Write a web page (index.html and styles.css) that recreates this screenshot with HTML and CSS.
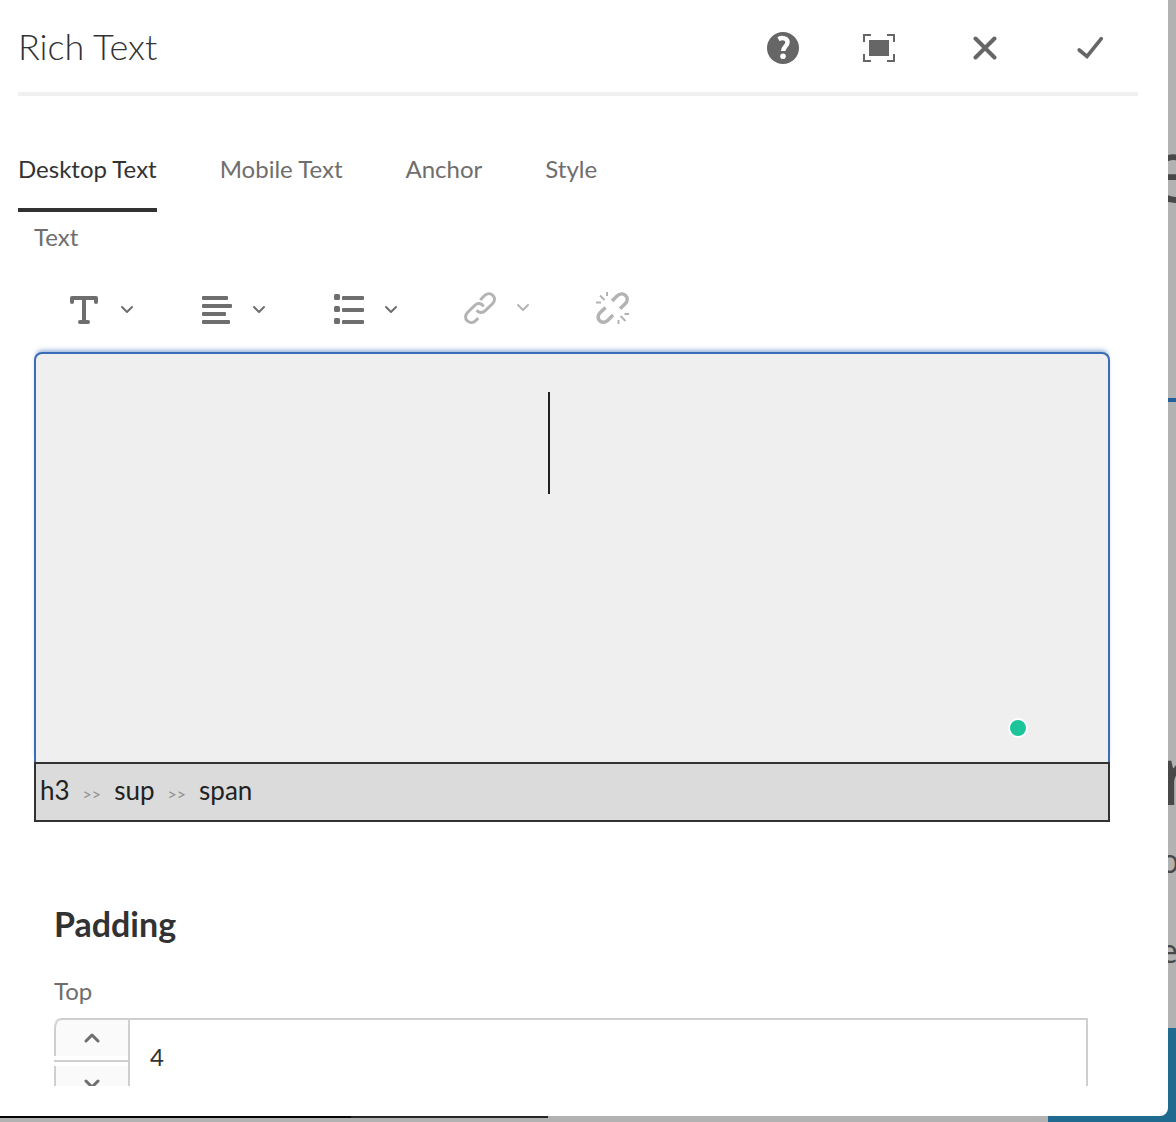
FILE: index.html
```html
<!DOCTYPE html>
<html lang="en">
<head>
  <meta charset="UTF-8">
  <meta name="viewport" content="width=device-width, initial-scale=1.0">
  <title>Rich Text</title>
  <link rel="stylesheet" href="styles.css">
</head>
<body>
  <!-- dimmed page under the dialog -->
  <div class="backdrop" aria-hidden="true">
    <div class="page-photo"></div>
    <div class="page-column">
      <div class="page-title">e</div>
      <div class="page-rule"></div>
      <div class="page-heading">r</div>
      <div class="page-line">o</div>
      <div class="page-line">e</div>
    </div>
    <div class="page-footer"></div>
  </div>

  <main class="dialog" role="dialog" aria-labelledby="dialog-title">
    <header class="dialog-header">
      <h1 id="dialog-title">Rich Text</h1>
      <div class="header-tools">
        <button type="button" aria-label="Help">
          <svg width="32" height="32" viewBox="0 0 32 32">
            <circle cx="16" cy="16" r="16" fill="currentColor"/>
            <path d="M11.500 7.200C15 5.200 20.500 6 20.500 10.200C20.500 14.200 16.300 14.300 16.300 19" fill="none" stroke="#fff" stroke-width="4.500"/>
            <circle cx="16" cy="24.300" r="2.800" fill="#fff"/>
          </svg>
        </button>
        <button type="button" aria-label="Toggle fullscreen">
          <svg width="32" height="28" viewBox="0 0 32 28" fill="none" stroke="currentColor" stroke-width="2">
            <path d="M1 8V1H8M24 1H31V8M31 20V27H24M8 27H1V20"/>
            <path d="M6 6H26V22H6Z" fill="currentColor" stroke="none"/>
          </svg>
        </button>
      </div>
      <div class="header-actions">
        <button type="button" aria-label="Cancel">
          <svg width="24" height="24" viewBox="0 0 24 24" fill="none" stroke="currentColor" stroke-width="4" stroke-linecap="round">
            <path d="M2.500 2.500L21.500 21.500M21.500 2.500L2.500 21.500"/>
          </svg>
        </button>
        <button type="button" aria-label="Done">
          <svg width="28" height="24" viewBox="0 0 28 24" fill="none" stroke="currentColor" stroke-width="3.600" stroke-linecap="round" stroke-linejoin="miter">
            <path d="M3.200 14L11 20.500L25.300 2.700"/>
          </svg>
        </button>
      </div>
    </header>

    <nav class="tabs" role="tablist">
      <button type="button" role="tab" class="tab active" aria-selected="true">Desktop Text</button>
      <button type="button" role="tab" class="tab">Mobile Text</button>
      <button type="button" role="tab" class="tab">Anchor</button>
      <button type="button" role="tab" class="tab">Style</button>
    </nav>

    <section class="panel">
      <div class="field-label" id="text-label">Text</div>

      <div class="toolbar" role="toolbar">
        <button type="button" class="tool" aria-label="Text format">
          <svg width="32" height="32" viewBox="0 0 32 32" fill="none" stroke="currentColor" stroke-width="4" stroke-linecap="round" stroke-linejoin="round">
            <path d="M4 8V4H28V8M12 28H20"/>
            <path d="M16 4V28"/>
          </svg>
          <svg class="chevron" width="14" height="10" viewBox="0 0 14 10"><path d="M2 2L7 7L12 2"/></svg>
        </button>
        <button type="button" class="tool" aria-label="Justify">
          <svg width="32" height="32" viewBox="0 0 32 32" fill="currentColor">
            <rect x="2" y="2" width="26" height="4" rx="1"/>
            <rect x="2" y="10" width="30" height="4" rx="1"/>
            <rect x="2" y="18" width="24" height="4" rx="1"/>
            <rect x="2" y="26" width="28" height="4" rx="1"/>
          </svg>
          <svg class="chevron" width="14" height="10" viewBox="0 0 14 10"><path d="M2 2L7 7L12 2"/></svg>
        </button>
        <button type="button" class="tool" aria-label="Lists">
          <svg width="32" height="32" viewBox="0 0 32 32" fill="currentColor">
            <rect x="2" y="0" width="6" height="6" rx="1.500"/>
            <rect x="2" y="12" width="6" height="6" rx="1.500"/>
            <rect x="2" y="24" width="6" height="6" rx="1.500"/>
            <rect x="10" y="2" width="22" height="4" rx="1"/>
            <rect x="10" y="14" width="22" height="4" rx="1"/>
            <rect x="10" y="26" width="22" height="4" rx="1"/>
          </svg>
          <svg class="chevron" width="14" height="10" viewBox="0 0 14 10"><path d="M2 2L7 7L12 2"/></svg>
        </button>
        <button type="button" class="tool" aria-label="Hyperlink" disabled>
          <svg width="32" height="32" viewBox="0 0 32 32" fill="none" stroke="currentColor" stroke-width="3">
            <path d="M16.200 8L20.300 3.700C22.800 1.200 26.400 0.900 28.700 3.200C31.200 5.700 31 9.200 28.500 11.700L21.300 18.700C18.600 21.300 14.800 20.900 12.600 18.300"/>
            <path d="M19.500 14.500C17.800 11 13.800 10.600 11.200 13L3.700 20.300C1 23 0.900 26.500 3.200 28.800C5.700 31.200 9.200 31 11.700 28.600L14.200 26.200"/>
          </svg>
          <svg class="chevron" width="14" height="10" viewBox="0 0 14 10"><path d="M2 2L7 7L12 2"/></svg>
        </button>
        <button type="button" class="tool" aria-label="Unlink" disabled>
          <svg width="34" height="32" viewBox="0 0 34 32" fill="none" stroke="currentColor" stroke-width="3.500">
            <path d="M16 9L21 4C23.700 1.400 27.300 1.300 29.600 3.600C31.900 5.900 31.700 9.200 29.200 11.700L24 16.700"/>
            <path d="M9.500 15.500L4.300 20.500C1.500 23.200 1.400 26.500 3.700 28.700C6 31 9.300 30.700 11.900 28.200L17 23.100"/>
            <path d="M11 0V4M0 10.500H5M4 3.500L8.500 8M22.500 28V32M28.500 22H33M24.500 24L29.500 29" stroke-width="2"/>
          </svg>
        </button>
      </div>

      <div class="editor">
        <div class="editable" contenteditable="true" role="textbox" aria-multiline="true" aria-labelledby="text-label"><span class="caret"></span></div>
        <span class="status-dot"></span>
      </div>
      <div class="element-path">
        <a href="#">h3</a><span class="separator">&gt;&gt;</span><a href="#">sup</a><span class="separator">&gt;&gt;</span><a href="#">span</a>
      </div>

      <div class="padding-group">
        <h2>Padding</h2>
        <label class="field-label" for="padding-top">Top</label>
        <div class="number-field">
          <div class="steppers">
            <button type="button" aria-label="Increment">
              <svg width="18" height="12" viewBox="0 0 18 12"><path d="M3 9L9 3L15 9"/></svg>
            </button>
            <div class="divider"></div>
            <button type="button" aria-label="Decrement">
              <svg width="18" height="12" viewBox="0 0 18 12"><path d="M3 3L9 9L15 3"/></svg>
            </button>
          </div>
          <input type="number" id="padding-top" value="4">
        </div>
      </div>
    </section>
  </main>
</body>
</html>
```
FILE: styles.css
```css
* {
  box-sizing: border-box;
}

body {
  margin: 0;
  height: 100vh;
  padding: 0 8px 6px 0;
  overflow: hidden;
  background: #b2b2b2;
  color: #323232;
  font-family: Lato, "Open Sans", sans-serif;
  font-size: 24px;
  line-height: 32px;
}

button, input {
  margin: 0;
  padding: 0;
  border: 0;
  background: none;
  color: inherit;
  font: inherit;
}

svg {
  display: block;
  flex: none;
}

/* page behind */
.backdrop {
  position: absolute;
  inset: 0;
  overflow: hidden;
  color: #484848;
  font-family: "Open Sans", sans-serif;
}

.page-column {
  width: 28px;
  margin-left: auto;
  padding-top: 118px;
}

.page-title {
  font-size: 88px;
  line-height: 100px;
}

.page-rule {
  height: 4px;
  margin: 180px 0 336px;
  background: #23609c;
}

.page-heading {
  padding-left: 8px;
  font-size: 80px;
  font-weight: bold;
  line-height: 72px;
}

.page-line {
  padding-left: 12px;
  font-size: 32px;
  line-height: 90px;
}

.page-heading + .page-line {
  padding-top: 6px;
}

.page-photo {
  position: absolute;
  bottom: 4px;
  left: 0;
  width: 548px;
  height: 40px;
  background: linear-gradient(to right, #050608 64%, #262626 64%);
}

.page-footer {
  position: absolute;
  right: 0;
  bottom: 0;
  width: 128px;
  height: 94px;
  background: #20698f;
}

/* dialog */
.dialog {
  position: relative;
  display: flex;
  flex-direction: column;
  height: 100%;
  padding: 0 30px 30px 18px;
  background: #fff;
  border-radius: 0 0 8px 0;
}

.dialog-header {
  display: flex;
  flex: none;
  align-items: center;
  height: 96px;
  border-bottom: 4px solid #f0f0f0;
}

.dialog-header h1 {
  margin: 0 auto 0 0;
  font-size: 36px;
  font-weight: 300;
  line-height: 48px;
}

.header-tools, .header-actions {
  display: flex;
  color: #666;
}

.header-actions {
  gap: 9px;
  margin-left: 10px;
}

.dialog-header button {
  display: flex;
  align-items: center;
  justify-content: center;
  width: 96px;
  height: 88px;
  padding-top: 4px;
}

.tabs {
  display: flex;
  flex: none;
  gap: 63px;
  padding-top: 36px;
}

.tab {
  height: 80px;
  padding: 0 0 2px;
  border-bottom: 4px solid transparent;
  color: #6e6e6e;
}

.tab.active {
  border-color: #323232;
  color: #323232;
}

.panel {
  flex: 1;
  min-height: 0;
  overflow: hidden;
  padding: 10px 28px 0 16px;
}

.field-label {
  display: block;
  padding-bottom: 2px;
  color: #6e6e6e;
  line-height: 30px;
}

.toolbar {
  display: flex;
  height: 98px;
  padding: 20px 0 0 34px;
}

.tool {
  display: flex;
  align-items: center;
  gap: 20px;
  width: 132px;
  height: 72px;
  color: #6e6e6e;
}

.tool:disabled {
  padding-bottom: 4px;
  color: #b3b3b3;
}

.chevron, .steppers svg {
  fill: none;
  stroke: currentColor;
  stroke-width: 2;
  stroke-linecap: round;
  stroke-linejoin: round;
}

.editor {
  position: relative;
  height: 410px;
  border: 2px solid #3b6cb7;
  border-bottom: 0;
  border-radius: 8px 8px 0 0;
  background: #efefef;
  box-shadow: 0 -4px 4px -2px rgba(59, 108, 183, 0.5);
}

.editable {
  height: 100%;
  padding: 38px 46px 0 0;
  text-align: center;
  outline: none;
}

.caret {
  display: inline-block;
  width: 2px;
  height: 102px;
  background: #222;
}

.status-dot {
  position: absolute;
  right: 80px;
  bottom: 24px;
  width: 20px;
  height: 20px;
  border: 2px solid #fff;
  border-radius: 50%;
  background: #1bc499;
}

.element-path {
  position: relative;
  display: flex;
  align-items: center;
  gap: 13px;
  height: 60px;
  padding: 0 4px 4px;
  border: 2px solid #323232;
  background: #dbdbdb;
  font-size: 26px;
}

.element-path a {
  color: #222;
  text-decoration: none;
}

.separator {
  padding-top: 8px;
  color: #8e8e8e;
  font-size: 16px;
}

.padding-group {
  padding: 80px 22px 0 20px;
}

.padding-group h2 {
  margin: 0 0 30px;
  font-size: 34px;
  font-weight: bold;
  line-height: 44px;
}

.number-field {
  display: flex;
  height: 80px;
  margin-top: 10px;
}

.steppers {
  display: flex;
  flex-direction: column;
  width: 76px;
  border-top: 2px solid #cfcfcf;
  border-right: 2px solid #cfcfcf;
  border-radius: 8px 0 0 0;
  color: #6e6e6e;
}

.steppers button {
  display: flex;
  flex: none;
  align-items: center;
  justify-content: center;
  height: 36px;
  border-left: 2px solid #cfcfcf;
  background: #fafafa;
}

.steppers button:first-child {
  border-radius: 8px 0 0 0;
}

.steppers svg {
  stroke-width: 3;
}

.divider {
  flex: none;
  height: 2px;
  margin: 4px 0;
  background: #cfcfcf;
}

.number-field input {
  flex: 1;
  min-width: 0;
  padding: 0 20px 2px;
  border: 2px solid #cfcfcf;
  border-left: 0;
  appearance: textfield;
}

.number-field input::-webkit-inner-spin-button {
  appearance: none;
}
```
